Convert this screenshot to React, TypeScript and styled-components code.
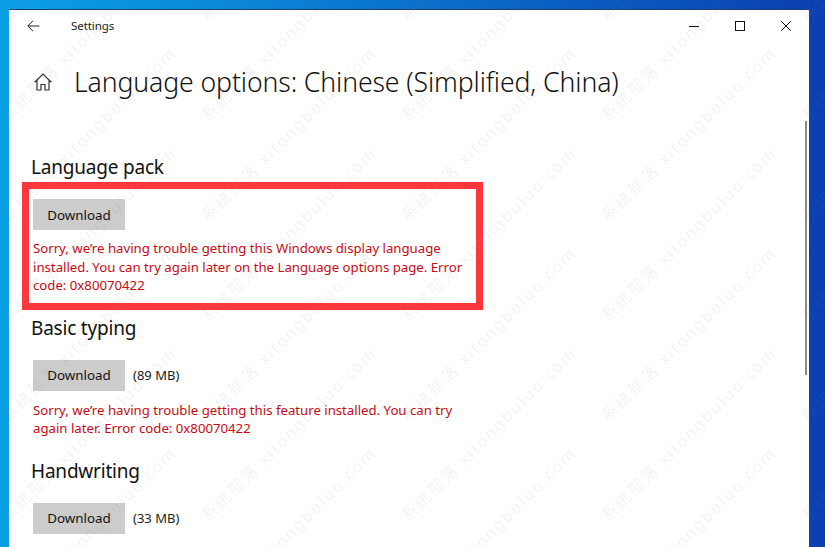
import React from "react";
import styled, { createGlobalStyle } from "styled-components";

const GlobalStyle = createGlobalStyle`
  html, body {
    margin: 0;
    padding: 0;
    height: 547px;
    overflow: hidden;
    font-family: "Noto Sans", "Open Sans", sans-serif;
  }
`;

const Desktop = styled.div`
  position: relative;
  width: 825px;
  height: 547px;
  overflow: hidden;
  box-sizing: border-box;
  padding: 9px 16px 0 9px;
  background: linear-gradient(90deg, #0a9fe6 0%, #0a8fdc 20%, #0a6cc8 55%, #0a3fb2 100%);
`;

const Window = styled.div`
  height: 538px;
  background: #fff;
  border-top: 1px solid #1d3f6b;
  box-sizing: border-box;
  overflow: hidden;
`;

const TitleBar = styled.div`
  display: flex;
  align-items: center;
  height: 31px;
  padding-left: 18px;
`;

const BackButton = styled.div`
  display: flex;
  width: 14px;
  margin-right: 30px;
`;

const AppName = styled.div`
  font-size: 11.6px;
  color: #222;
  flex: 1;
  letter-spacing: -0.1px;
`;

const WindowControls = styled.div`
  display: flex;
  align-items: center;
  gap: 36px;
  padding-right: 18px;
`;

const ControlIcon = styled.svg`
  display: block;
  width: 10px;
  height: 10px;
`;

const Content = styled.div`
  display: flex;
  flex-direction: column;
  padding: 0 0 0 24px;
`;

const PageHeader = styled.div`
  display: flex;
  align-items: center;
  height: 46px;
  margin-top: 18px;
  margin-bottom: 49px;
`;

const HomeIcon = styled.svg`
  width: 18px;
  height: 18px;
  margin-left: 1px;
  margin-right: 22px;
`;

const PageTitle = styled.h1`
  margin: 0;
  font-size: 26.6px;
  font-weight: 300;
  color: #111;
  letter-spacing: -0.1px;
  white-space: nowrap;
`;

const SectionTitle = styled.h2`
  margin: 0 0 0 -2px;
  font-size: 19px;
  font-weight: 400;
  line-height: 26px;
  color: #111;
  letter-spacing: -0.2px;
`;

const Section = styled.section`
  margin-bottom: 20px;
`;

const HighlightBox = styled.div`
  position: absolute;
  left: 22px;
  top: 182px;
  width: 461px;
  height: 128px;
  box-sizing: border-box;
  border: 7px solid #fd373c;
`;

const DownloadRow = styled.div`
  display: flex;
  align-items: center;
  gap: 8px;
  margin-top: 19px;
`;

const DownloadButton = styled.button`
  width: 92px;
  height: 31px;
  border: 0;
  padding: 0;
  background: #ccc;
  color: #111;
  font-family: inherit;
  font-size: 13.4px;
`;

const SizeLabel = styled.span`
  font-size: 13px;
  color: #222;
`;

const ErrorText = styled.p<{ $top: number }>`
  width: 430px;
  margin: ${(p) => p.$top}px 0 0;
  font-size: 13.2px;
  line-height: 18.5px;
  color: #c80a14;
`;

const Scrollbar = styled.div`
  position: absolute;
  left: 805px;
  top: 121px;
  width: 2px;
  height: 254px;
  background: #8a8a8a;
`;

const WatermarkLayer = styled.div`
  position: absolute;
  left: -211px;
  top: -116px;
  display: grid;
  grid-template-columns: repeat(6, 200px);
  grid-auto-rows: 100px;
  pointer-events: none;
`;

const Watermark = styled.span`
  justify-self: center;
  align-self: center;
  font-family: "Noto Sans", "Noto Sans CJK SC", sans-serif;
  font-size: 16px;
  font-weight: 300;
  line-height: 20px;
  letter-spacing: 2.4px;
  white-space: nowrap;
  color: rgba(130, 130, 130, 0.15);
  transform: rotate(-45deg);
`;

const marks: string[] = [];
for (let row = 0; row < 7; row++) {
  for (let col = 0; col < 6; col++) {
    marks.push(row + "-" + col);
  }
}

const App = () => {
  return (
    <Desktop>
      <GlobalStyle />
      <Window>
        <TitleBar>
          <BackButton>
            <svg width="13" height="12" viewBox="0 0 13 12" fill="none" stroke="#222" strokeWidth="1">
              <path d="M0.8 6H12.5M6 0.8L0.8 6L6 11.2" />
            </svg>
          </BackButton>
          <AppName>Settings</AppName>
          <WindowControls>
            <ControlIcon viewBox="0 0 10 10" fill="none" stroke="#111">
              <path d="M0 5.5H10" />
            </ControlIcon>
            <ControlIcon viewBox="0 0 10 10" fill="none" stroke="#111">
              <rect x="0.5" y="0.5" width="9" height="9" />
            </ControlIcon>
            <ControlIcon viewBox="0 0 10 10" fill="none" stroke="#111">
              <path d="M0.2 0.2L9.8 9.8M9.8 0.2L0.2 9.8" />
            </ControlIcon>
          </WindowControls>
        </TitleBar>
        <Content>
          <PageHeader>
            <HomeIcon viewBox="0 0 18 18" fill="none" stroke="#333" strokeWidth="1.2">
              <path d="M0.6 9.2L9 1L17.4 9.2M3 7.2V17H7V11.5H11V17H15V7.2" />
            </HomeIcon>
            <PageTitle>Language options: Chinese (Simplified, China)</PageTitle>
          </PageHeader>
          <Section>
            <SectionTitle>Language pack</SectionTitle>
            <DownloadRow>
              <DownloadButton>Download</DownloadButton>
            </DownloadRow>
            <ErrorText $top={9}>
              Sorry, we’re having trouble getting this Windows display language installed. You can try again later on the Language options page. Error code: 0x80070422
            </ErrorText>
          </Section>
          <Section>
            <SectionTitle>Basic typing</SectionTitle>
            <DownloadRow>
              <DownloadButton>Download</DownloadButton>
              <SizeLabel>(89 MB)</SizeLabel>
            </DownloadRow>
            <ErrorText $top={10}>
              Sorry, we’re having trouble getting this feature installed. You can try again later. Error code: 0x80070422
            </ErrorText>
          </Section>
          <Section>
            <SectionTitle>Handwriting</SectionTitle>
            <DownloadRow>
              <DownloadButton>Download</DownloadButton>
              <SizeLabel>(33 MB)</SizeLabel>
            </DownloadRow>
          </Section>
        </Content>
      </Window>
      <HighlightBox />
      <Scrollbar />
      <WatermarkLayer>
        {marks.map((m) => (
          <Watermark key={m}>系统部落 xitongbuluo.com</Watermark>
        ))}
      </WatermarkLayer>
    </Desktop>
  );
};

export default App;
